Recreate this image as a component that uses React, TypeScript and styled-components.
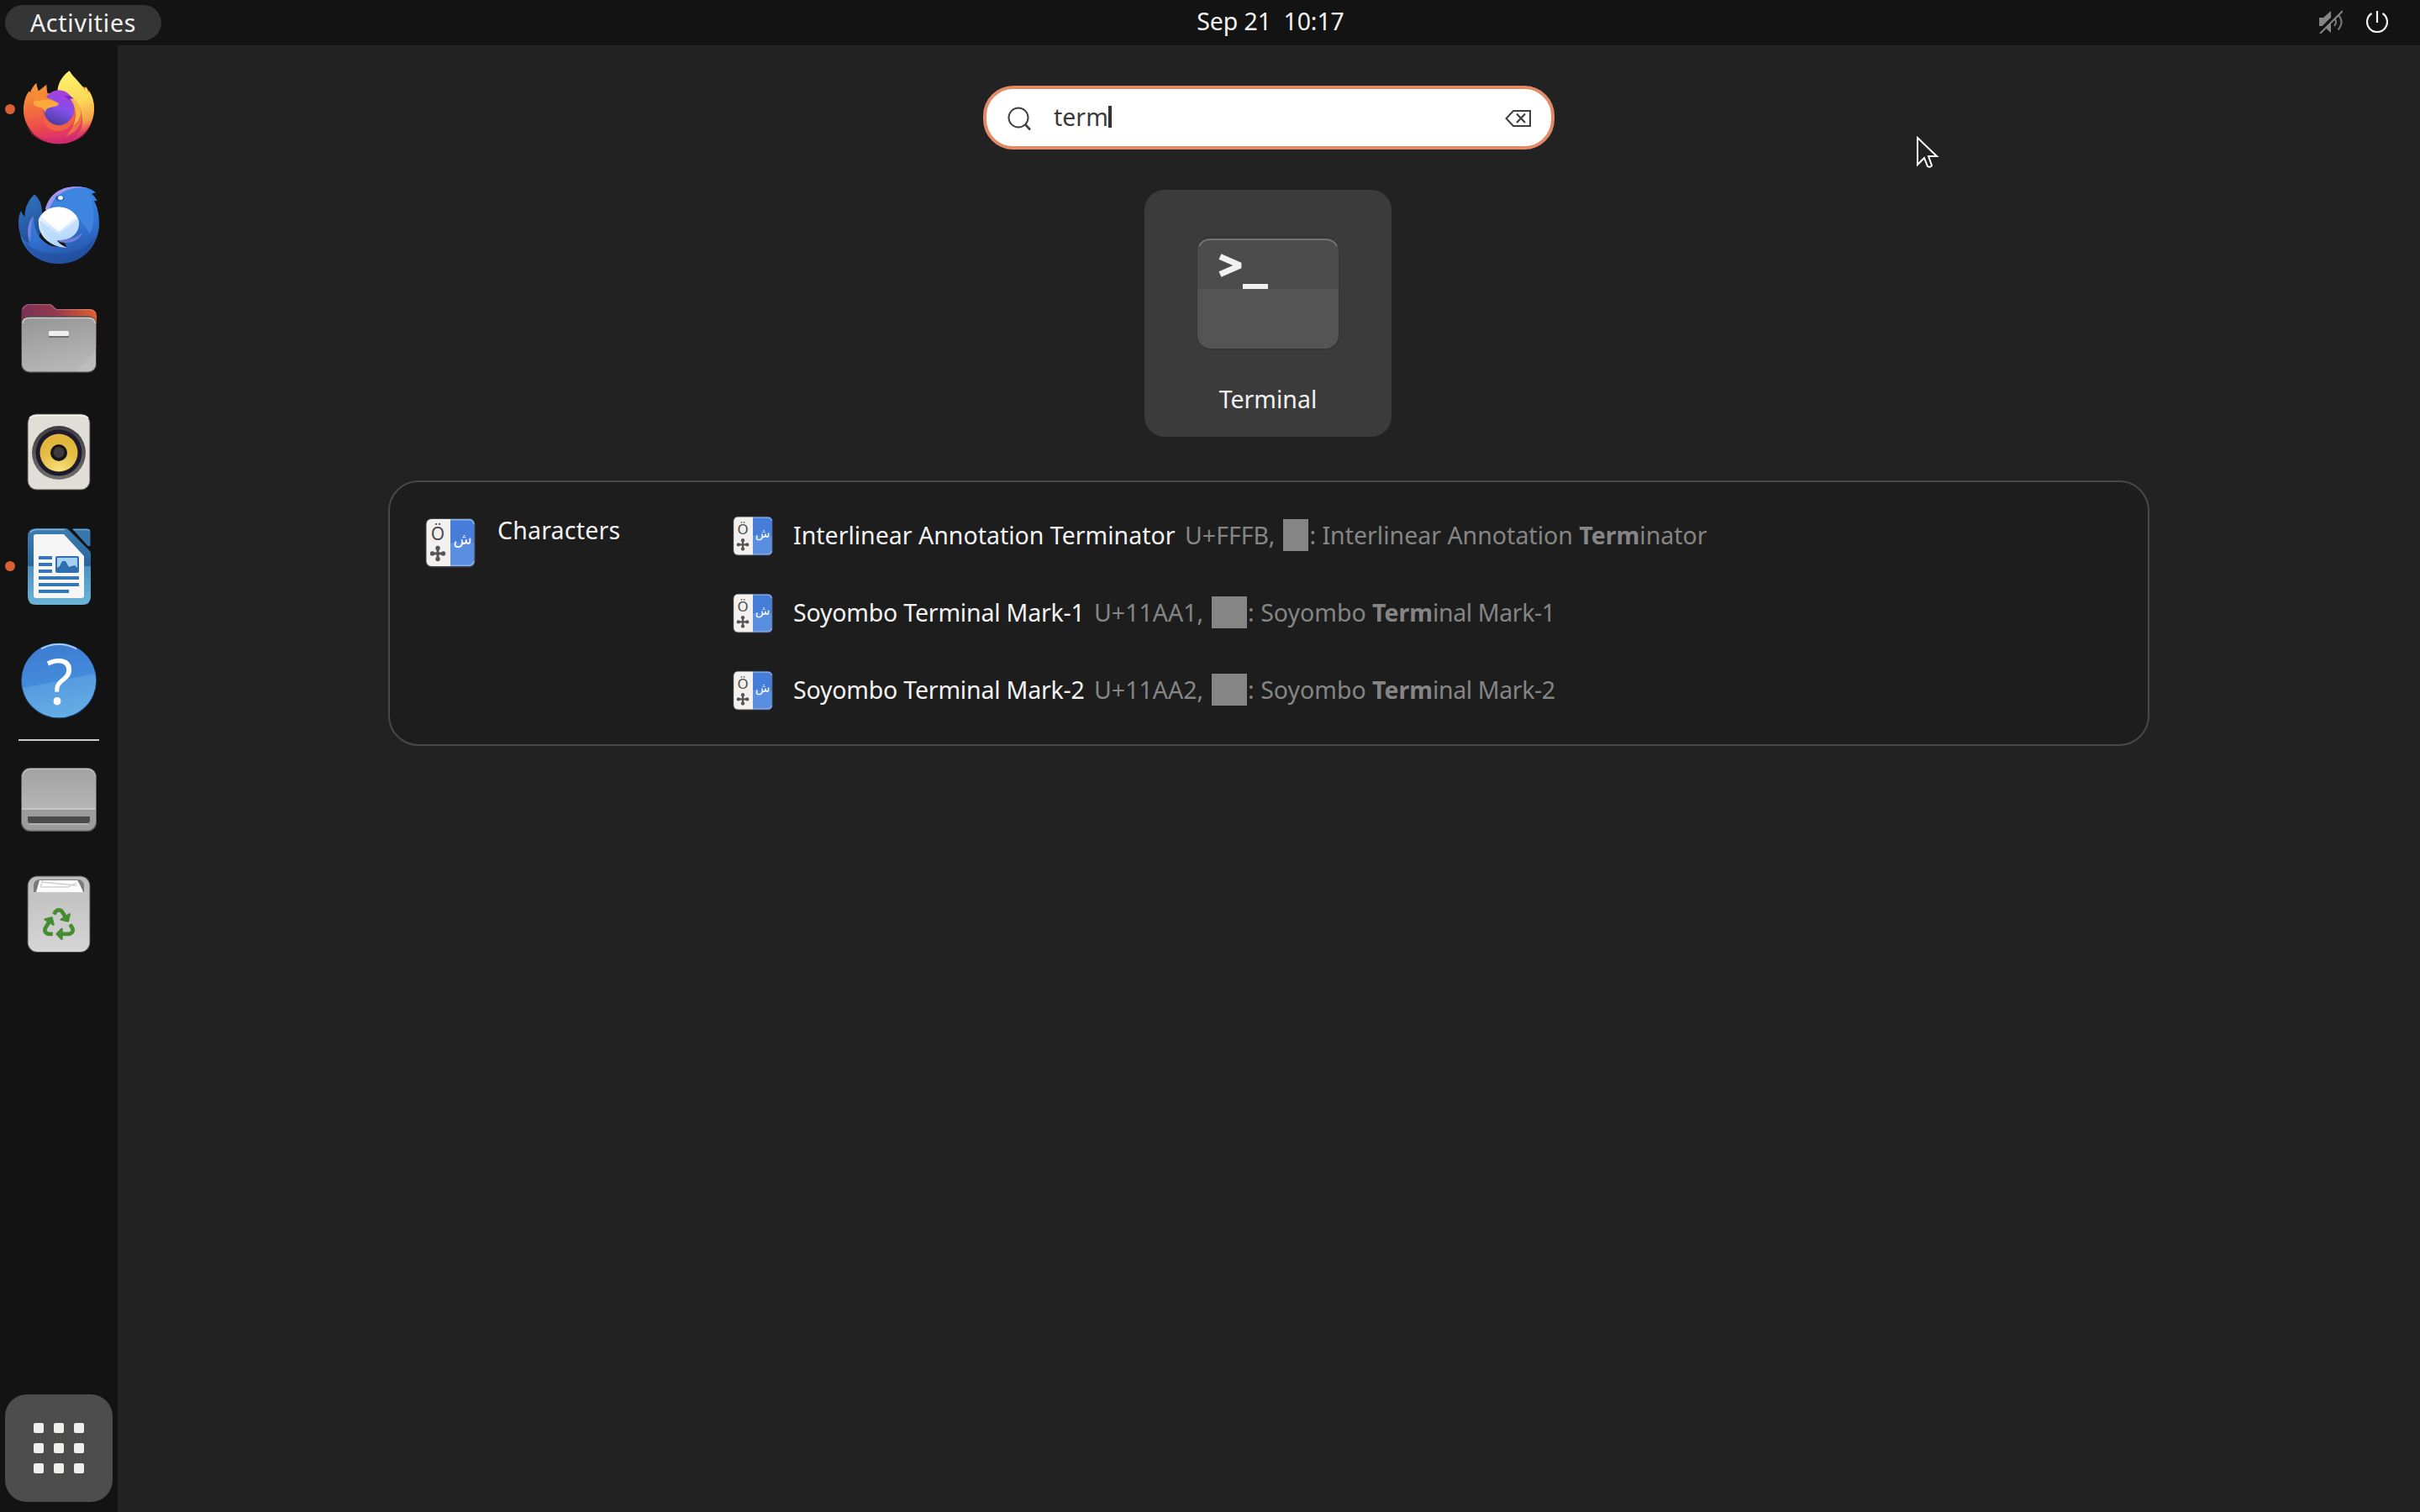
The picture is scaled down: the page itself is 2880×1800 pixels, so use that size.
import React from "react";
import styled, { createGlobalStyle } from "styled-components";
import { FaRecycle } from "react-icons/fa";

const FONT = `"Noto Sans", "Open Sans", sans-serif`;

const Global = createGlobalStyle`
  * { box-sizing: border-box; }
  body { margin: 0; background: #222222; }
`;

const Screen = styled.div`
  position: relative;
  width: 2880px;
  height: 1800px;
  display: flex;
  flex-direction: column;
  overflow: hidden;
  background: #222222;
  color: #f2f2f2;
  font-family: ${FONT};
  font-size: 28.5px;
  line-height: 40px;
`;

const Label = styled.span<{ $track?: number }>`
  white-space: pre;
  letter-spacing: ${(p) => p.$track ?? 0}px;
`;

/* ---------- top bar ---------- */

const TopBar = styled.header`
  flex: none;
  height: 54px;
  padding: 0 38px 0 6px;
  display: grid;
  grid-template-columns: 1fr auto 1fr;
  align-items: center;
  background: #131313;
`;

const ActivitiesButton = styled.div`
  width: 186px;
  height: 42px;
  border-radius: 21px;
  display: flex;
  align-items: center;
  justify-content: center;
  background: #353535;
`;

const Clock = styled.div`
  padding: 0 0 4px 176px;
`;

const StatusArea = styled.div`
  display: flex;
  justify-content: flex-end;
  align-items: center;
  gap: 28px;
  height: 100%;
  padding-bottom: 2px;
`;

/* ---------- dock ---------- */

const Body = styled.div`
  flex: 1;
  display: flex;
  min-height: 0;
`;

const Dock = styled.nav`
  flex: none;
  width: 140px;
  padding: 8px 0 12px;
  display: flex;
  flex-direction: column;
  background: #131313;
`;

const DockItem = styled.div`
  flex: none;
  height: 136px;
  display: grid;
  grid-template-columns: 16px 96px;
  padding-left: 6px;
  align-items: center;
`;

const RunningDot = styled.i<{ $on?: boolean }>`
  width: 12px;
  height: 12px;
  border-radius: 50%;
  background: ${(p) => (p.$on ? "#dc5f33" : "transparent")};
`;

const DockSeparator = styled.hr`
  flex: none;
  width: 96px;
  height: 2px;
  margin: 2px 22px;
  border: 0;
  background: #cdcdcd;
`;

const AppsButton = styled.div`
  margin: auto 6px 0;
  width: 128px;
  height: 128px;
  border-radius: 26px;
  display: grid;
  grid-template-columns: repeat(3, 12px);
  gap: 12px;
  place-content: center;
  background: #4d4d4d;
`;

const AppsDot = styled.i`
  width: 12px;
  height: 12px;
  border-radius: 2px;
  background: #eeeeec;
`;

/* ---------- overview ---------- */

const Overview = styled.main`
  flex: 1;
  padding-top: 48px;
  display: flex;
  flex-direction: column;
  align-items: center;
`;

const SearchEntry = styled.div`
  width: 680px;
  height: 76px;
  border: 4px solid #e38b69;
  border-radius: 36px;
  padding: 0 23px 0 25px;
  display: flex;
  align-items: center;
  background: #ffffff;
  color: #3a3a3a;
`;

const Query = styled.div`
  flex: 1;
  display: flex;
  align-items: center;
  padding: 0 0 2px 25px;
`;

const Caret = styled.i`
  width: 4px;
  height: 26px;
  background: #333;
`;

const AppTile = styled.section`
  margin: 48px 2px 0 0;
  width: 294px;
  height: 294px;
  border-radius: 24px;
  padding-top: 53px;
  display: flex;
  flex-direction: column;
  align-items: center;
  gap: 37px;
  background: #3b3b3b;
`;

const ResultsPanel = styled.section`
  margin-top: 52px;
  width: 2096px;
  height: 316px;
  border: 2px solid #484848;
  border-radius: 36px;
  padding: 18px 40px 18px 42px;
  display: grid;
  grid-template-columns: 366px 1fr;
  background: #1d1d1d;
`;

const Provider = styled.div`
  display: flex;
  align-items: flex-start;
  gap: 26px;
  padding-top: 19px;
`;

const ProviderIcon = styled.div`
  display: flex;
  padding-top: 5px;
`;

const ResultRow = styled.div`
  height: 92px;
  display: flex;
  align-items: center;
`;

const ResultTitle = styled.div<{ $w: number }>`
  width: ${(p) => p.$w}px;
  margin-left: 24px;
  padding-bottom: 2px;
`;

const ResultMeta = styled.div`
  display: flex;
  align-items: center;
  padding-bottom: 2px;
  color: #858585;
  b { font-weight: 700; }
`;

const Glyph = styled.i<{ $w: number }>`
  width: ${(p) => p.$w}px;
  height: 38px;
  margin: 0 1px 0 10px;
  background: #858585;
`;

const Pointer = styled.svg`
  position: absolute;
  left: 2280px;
  top: 162px;
`;

/* ---------- icons ---------- */

const Muted = () => (
  <svg width="28" height="28" viewBox="0 0 28 28">
    <path d="M0 9h5l9-8v26l-9-8H0z" fill="#858585" />
    <path d="M18 10q4 4 0 9M22.500 5.500q8 8.500 0 18" fill="none" stroke="#7a7a7a" strokeWidth="2" />
    <path d="M-.5 26.500L26.500 -.5" stroke="#131313" strokeWidth="4.500" />
    <path d="M1 28L28 1" stroke="#858585" strokeWidth="2" />
  </svg>
);

const Power = () => (
  <svg width="26" height="26" viewBox="0 0 26 26" fill="none" stroke="#f2f2f2" strokeWidth="2.200">
    <path d="M6.500 3A12 12 0 1 0 19.500 3M13 0v14" />
  </svg>
);

const Magnifier = () => (
  <svg width="30" height="32" viewBox="0 0 30 32" fill="none" stroke="#3f3f3f" strokeWidth="2">
    <circle cx="13" cy="16" r="11.500" />
    <path d="M21 24l6 6.500" strokeWidth="2.600" />
  </svg>
);

const Clear = () => (
  <svg width="32" height="24" viewBox="0 -2 32 24" fill="none" stroke="#3f3f3f" strokeWidth="2">
    <path d="M10 2H30V20H10L1.500 11z" />
    <path d="M14 5.500l10 10.500M24 5.500L14 16" strokeWidth="2.200" />
  </svg>
);

const Art = ({ children }: { children: React.ReactNode }) => (
  <svg width="96" height="96" viewBox="0 0 96 96" overflow="visible">{children}</svg>
);

const Firefox = () => (
  <Art>
    <defs>
      <linearGradient id="ffBody" x1="0.25" y1="0" x2="0.55" y2="1">
        <stop offset="0" stopColor="#f79a34" />
        <stop offset=".42" stopColor="#f2693f" />
        <stop offset=".72" stopColor="#ea4350" />
        <stop offset="1" stopColor="#d42a7c" />
      </linearGradient>
      <linearGradient id="ffFlame" x1="0.45" y1="0" x2="0.6" y2="1">
        <stop offset="0" stopColor="#fff36b" />
        <stop offset=".45" stopColor="#fbd857" />
        <stop offset=".75" stopColor="#f4a04c" />
        <stop offset="1" stopColor="#ea4a50" stopOpacity="0" />
      </linearGradient>
      <linearGradient id="ffGlobe" x1="0.7" y1="0" x2="0.3" y2="1">
        <stop offset="0" stopColor="#b23adb" />
        <stop offset=".5" stopColor="#8150ea" />
        <stop offset="1" stopColor="#4a3a9c" />
      </linearGradient>
    </defs>
    <g transform="translate(0 -.8)">
      <path d="M21.300 17.500C22 22 22.500 24 24 27c3-2 6-5 9.300-7.500.2 4 .4 7 1.400 10.500H47l30-8 3.700 1C87 30 90 39 90 48c0 24-19 42-42 42S6 72 6 50c0-9 2-17 6.500-22.500.8 0 1 .5 1.500 1.500C15 25 18 20.500 21.300 17.500z" fill="url(#ffBody)" />
      <path d="M10 70c8 12 24 15 38 14 18-1 32-8 39-20-5 18-22 26-39 26-18 0-32-8-38-20z" fill="#cf2a6c" opacity=".65" />
      <path d="M60.700 3C66 12 74 17 79 26l1.300-4c2 3 2 5 2.700 7.500l1-2.500c4 6 6 13 6 21 0 18-11 33-26 38 9-8 13-16 12-26C75 44 66 33 46.500 27 47 17 53 8 60.700 3z" fill="url(#ffFlame)" />
      <path d="M68 38c7 8 9 18 6 28-4 8-10 12-18 15 8-8 12-17 13-26z" fill="#f0873f" opacity=".7" />
      <path d="M30 48h36c4 10 0 24-18 27-14 0-22-12-18-27z" fill="#ef6044" />
      <ellipse cx="48" cy="47" rx="18.500" ry="21" fill="url(#ffGlobe)" />
      <path d="M60 34c8 2 14 10 14 18 0 7-4 13-9 16 3-7 4-13 2-20-1-5-4-10-7-14z" fill="#f9bd4c" opacity=".9" />
      <path d="M53 33c5-1 9 0 13 3-4 0-5 1-6 2-2-3-4-4-7-5z" fill="#7a2fc0" />
      <path d="M24 27c4 8 14 8 24 15l-14 3-12-2-8-14z" fill="#f58a38" />
      <path d="M17.500 40.500c2-3 5-2 8-2 6-2 14-1 22 3 1 4-5 4-9 5-5 1-6 3-7 7-1-5-3-7-7-7-4-1-7-3-7-6z" fill="#fba83c" />
    </g>
  </Art>
);

const Thunderbird = () => (
  <Art>
    <defs>
      <linearGradient id="tbBody" x1="0.3" y1="0" x2="0.6" y2="1">
        <stop offset="0" stopColor="#3f8ae6" />
        <stop offset=".6" stopColor="#3272d2" />
        <stop offset="1" stopColor="#2350a0" />
      </linearGradient>
      <linearGradient id="tbWing" x1="0" y1="0" x2="0.3" y2="1">
        <stop offset="0" stopColor="#3478c8" />
        <stop offset="1" stopColor="#1f4c8f" />
      </linearGradient>
      <linearGradient id="tbMail" x1="0" y1="0" x2="0" y2="1">
        <stop offset="0" stopColor="#ffffff" />
        <stop offset="1" stopColor="#a9d3fb" />
      </linearGradient>
    </defs>
    <path d="M3 33c1 3 3 5 4.500 7.500C7 30 12 20 18.700 13.500 24 17 28 25 28 34L26 60 14 80C4 70 0 58 0 47c0-6 1-10 3-14z" fill="url(#tbWing)" />
    <path d="M32 31C36 14 50 4 70 4.300c9 0 16 2 22 7l-5 1.500c3 2 5 5 6.700 8.500L90 21c4 7 6 17 6 27 0 28-21 48-48 48C26 96 8 84 2 62c4 6 7 8 11 10-4-12-2-26 5-33 0 16 6 30 22 36l18 2z" fill="url(#tbBody)" />
    <path d="M32 31C36 14 50 3.500 70 4.300c5 0 10 1 13 2-18-3-32 2-38 14-3 5-7 7-10 13z" fill="#a395ee" />
    <path d="M36 33c5-16 16-26 36-27 6 0 11 2 16 5l-6 1 9 9-5-1c5 13 5 28-1 40L66 34 46 26z" fill="#3d85df" />
    <path d="M5 66c10 14 25 19 43 18 20 0 36-8 45-22-6 22-24 34-45 34C27 96 11 84 5 66z" fill="#234f9e" opacity=".6" />
    <path d="M18 39c-7 7-9 20-4 31 1-10 0-20 4-31z" fill="#8f86e4" opacity=".75" />
    <path d="M24 43C29 32 38 28.500 48 28.500S72 36 72 48c0 11-9 19-21 20h-5c2 4 7 7 13 9-20 0-35-13-35-29 0-2-.5-3 0-5z" fill="url(#tbMail)" />
    <path d="M25 44l23 18 23-20c2 8 0 16-6 21-5 4-11 5-19 5C33 64 26 56 25 44z" fill="#b4d8fa" opacity=".65" />
    <path d="M27 40l21 18 21-18C64 32 56 28.500 48 28.500S32 32 27 40z" fill="#ffffff" />
    <path d="M46 68c12 0 22-2 30-9-3 8-11 12-20 12-4 0-8-1-10-3z" fill="#6d7fdd" />
    <ellipse cx="49" cy="18" rx="5.500" ry="3.500" fill="#2a65b5" />
    <ellipse cx="50" cy="17.500" rx="3" ry="2.500" fill="#e9f6ff" />
  </Art>
);

const Files = () => (
  <Art>
    <defs>
      <linearGradient id="flBack" x1="0" y1="0" x2="1" y2="0">
        <stop offset="0" stopColor="#7b3157" />
        <stop offset=".45" stopColor="#93394d" />
        <stop offset="1" stopColor="#e0602f" />
      </linearGradient>
      <linearGradient id="flFront" x1="0.3" y1="0" x2="0.6" y2="1">
        <stop offset="0" stopColor="#989898" />
        <stop offset="1" stopColor="#b8b8b8" />
      </linearGradient>
    </defs>
    <path d="M3.500 60V17c0-5 4-9 9-9h25c4 0 5 6 9 6h38c5 0 8.500 3 8.500 8v38z" fill="url(#flBack)" />
    <path d="M5 14c2-4 4-5.500 8-5.500h24c4 0 5 6 9 6h38c4 0 6 1 8 4" fill="none" stroke="#ffffff" strokeOpacity=".25" strokeWidth="1.200" />
    <rect x="3" y="22" width="90" height="68" rx="10" fill="#4c4c4c" opacity=".8" />
    <rect x="4" y="24" width="88" height="64.500" rx="9" fill="url(#flFront)" />
    <path d="M5 31c0-4 3-6.500 8-6.500h70c5 0 8 2.500 8 6.500" fill="none" stroke="#d0d0d0" strokeWidth="1.400" />
    <path d="M92 63v17c0 5-4 8.500-9 8.500H68z" fill="#fff" opacity=".09" />
    <rect x="36" y="42" width="24" height="6" rx="1.500" fill="#6f6f6f" />
    <rect x="36" y="40" width="24" height="6" rx="1.500" fill="#eeeeee" />
  </Art>
);

const Rhythmbox = () => (
  <Art>
    <defs>
      <radialGradient id="rbCone" cx=".5" cy=".95" r=".8">
        <stop offset="0" stopColor="#f9e27c" />
        <stop offset=".6" stopColor="#e6bf48" />
        <stop offset="1" stopColor="#e2b53c" />
      </radialGradient>
      <linearGradient id="rbRing" x1="0" y1="0" x2="0" y2="1">
        <stop offset="0" stopColor="#3e3e3e" />
        <stop offset="1" stopColor="#6e6e6c" />
      </linearGradient>
    </defs>
    <rect x="10.500" y="2.500" width="75" height="91" rx="11" fill="#4b4a47" />
    <rect x="11.500" y="3.500" width="73" height="89" rx="10" fill="#e0ded6" />
    <path d="M13 8q3-3.500 8-3.500h54q5 0 8 3.500" fill="none" stroke="#f8f7f2" strokeWidth="1.500" />
    <circle cx="48" cy="49" r="32" fill="url(#rbRing)" />
    <circle cx="48" cy="49" r="27.500" fill="#1c1a2b" />
    <circle cx="48" cy="49" r="22.500" fill="url(#rbCone)" />
    <circle cx="48" cy="49" r="10" fill="#161616" />
    <circle cx="48" cy="48.500" r="6.500" fill="#3c3c3c" />
  </Art>
);

const Writer = () => (
  <Art>
    <defs>
      <linearGradient id="wrPage" x1="0" y1="0" x2="0" y2="1">
        <stop offset="0" stopColor="#3b7db2" />
        <stop offset=".49" stopColor="#29659a" />
        <stop offset=".5" stopColor="#4c92c0" />
        <stop offset="1" stopColor="#6db4d8" />
      </linearGradient>
    </defs>
    <path d="M21 3h35q2 0 4 2l24 24q2 2 2 4v51q0 10-10 10H21Q11 94 11 84V13Q11 3 21 3z" fill="url(#wrPage)" />
    <path d="M14 8q3-3.500 7-3.500h34" fill="none" stroke="#7fb0d6" strokeWidth="1.500" />
    <path d="M64 3.500h18q3.500 0 3.500 3.500v17h-3z" fill="#3a76aa" />
    <path d="M65 4.500h17q2 0 2.500 2" fill="none" stroke="#6ea4cd" strokeWidth="1.500" />
    <path d="M20.500 10H54l24 26v47q0 3-3 3H21q-3 0-3-3V12.500q0-2.500 2.500-2.500z" fill="#f6f6f6" />
    <path d="M24 36h16v4H24zM24 44h16v4H24zM24 52h16v4H24zM24 60h48v4H24zM24 68h48v4H24zM24 76h36v4H24z" fill="#3677b8" />
    <rect x="44" y="36" width="28" height="20" rx="2" fill="#2f6fb0" />
    <path d="M46 38h24v12l-3-3-4 1-3 1-4-7-4 0-3 6-3 2z" fill="#a5d2f3" />
  </Art>
);

const Help = () => (
  <Art>
    <defs>
      <linearGradient id="hpDisc" x1=".4" y1="0" x2=".6" y2="1">
        <stop offset="0" stopColor="#3c7bd2" />
        <stop offset=".5" stopColor="#448bdb" />
        <stop offset=".51" stopColor="#569bdf" />
        <stop offset="1" stopColor="#66aee6" />
      </linearGradient>
    </defs>
    <circle cx="48" cy="48.500" r="45" fill="#1b3a66" />
    <circle cx="48" cy="48" r="44.300" fill="url(#hpDisc)" />
    <path d="M27 10.500a43 43 0 0 1 42 0" fill="none" stroke="#a9cdf2" strokeWidth="1.800" />
    <text x="49" y="76.500" textAnchor="middle" fontFamily="Open Sans" fontWeight="400" fontSize="75" fill="#fff">?</text>
  </Art>
);

const Drive = () => (
  <Art>
    <defs>
      <linearGradient id="drTop" x1="0" y1="0" x2="0" y2="1">
        <stop offset="0" stopColor="#a3a3a3" />
        <stop offset="1" stopColor="#b5b5b5" />
      </linearGradient>
    </defs>
    <rect x="3" y="10" width="90" height="76" rx="11" fill="#5f5f5f" />
    <rect x="4" y="11" width="88" height="73.500" rx="10" fill="#9c9c9c" />
    <path d="M4 59V22q0-10 10-10h68q10 0 10 10v37z" fill="url(#drTop)" />
    <path d="M4 59h88" stroke="#cfcfcf" strokeWidth="1.600" />
    <path d="M5 20q1-8 9-8.500h68q8 .5 9 8.500" fill="none" stroke="#bdbdbd" strokeWidth="1.300" />
    <path d="M11 68h74v5q0 3-3 3H14q-3 0-3-3z" fill="#4b4b4b" />
    <path d="M13 77h70" stroke="#bcbcbc" strokeWidth="1.300" />
  </Art>
);

const Trash = () => (
  <Art>
    <defs>
      <linearGradient id="trBin" x1="0" y1="0" x2="0" y2="1">
        <stop offset="0" stopColor="#bcbcbc" />
        <stop offset="1" stopColor="#d6d6d6" />
      </linearGradient>
    </defs>
    <rect x="10.500" y="2.500" width="75" height="91.500" rx="12" fill="#505050" />
    <rect x="11.500" y="3.500" width="73" height="89.500" rx="11" fill="url(#trBin)" />
    <path d="M18 22v-7q0-8 8-8h44q8 0 8 8v7z" fill="#7b7b7b" />
    <path d="M21 22l4-14h45l3 5 4 9z" fill="#ffffff" />
    <path d="M27 10l42 4M27 16h32l10-5M29 8l-3 8" stroke="#cfcfcf" strokeWidth="1.300" fill="none" />
    <path d="M13 22.700h70" stroke="#c8c8c8" strokeWidth="1.400" />
    <FaRecycle x="29" y="41" size={38} color="#468c31" />
  </Art>
);

const TerminalIcon = () => (
  <svg width="172" height="139" viewBox="0 0 172 139">
    <rect x="1" y="2" width="170" height="136" rx="18" fill="#353535" />
    <rect x="2" y="5" width="168" height="131" rx="16" fill="#545454" />
    <path d="M2 65V21Q2 5 18 5h136q16 0 16 16v44z" fill="#4c4c4c" />
    <path d="M4 14Q8 6 18 6h136q10 0 14 8" fill="none" stroke="#727272" strokeWidth="2" />
    <path d="M29 26.500L53 37 29 47.500" fill="none" stroke="#f0f0f0" strokeWidth="7" strokeLinejoin="bevel" />
    <path d="M56 59h30v6H56z" fill="#f0f0f0" />
  </svg>
);

const CharactersIcon = ({ size }: { size: number }) => (
  <svg width={size} height={size} viewBox="0 0 60 60">
    <rect x="0.500" y="1" width="59" height="58.500" rx="7" fill="#46474a" />
    <path d="M30 2H8Q1.500 2 1.500 9v42q0 7 6.500 7h22z" fill="#f2f1ef" />
    <path d="M30 2h22q6.500 0 6.500 7v21H30z" fill="#457dd9" />
    <path d="M30 30h28.500v21q0 7-6.500 7H30z" fill="#5a8ee0" />
    <path d="M30 2.800h22q5 0 6 5M30 57.200h22q5 0 6-5" fill="none" stroke="#8cb3f0" strokeWidth="1.500" />
    <text x="15" y="27" textAnchor="middle" fontFamily="Noto Sans" fontSize="21" fill="#4b4b4b">Ö</text>
    <g fill="#555">
      <path d="M13.500 35h3v16h-3zM7 41.500h16v3H7z" />
      <circle cx="15" cy="36.500" r="2.700" /><circle cx="15" cy="49.500" r="2.700" />
      <circle cx="8.500" cy="43" r="2.700" /><circle cx="21.500" cy="43" r="2.700" />
    </g>
    <text x="44.500" y="32" textAnchor="middle" fontFamily="DejaVu Sans" fontSize="18" fill="#fff">ش</text>
  </svg>
);

/* ---------- data ---------- */

const favourites = [
  { name: "Firefox", Icon: Firefox, running: true },
  { name: "Thunderbird", Icon: Thunderbird },
  { name: "Files", Icon: Files },
  { name: "Rhythmbox", Icon: Rhythmbox },
  { name: "Writer", Icon: Writer, running: true },
  { name: "Help", Icon: Help },
];

const places = [
  { name: "Drive", Icon: Drive },
  { name: "Trash", Icon: Trash },
];

const results = [
  { title: "Interlinear Annotation Terminator", titleWidth: 466, code: "U+FFFB,", glyph: 30, lead: ": Interlinear Annotation ", tail: "inator", track: 0, tailTrack: 0 },
  { title: "Soyombo Terminal Mark-1", titleWidth: 358, code: "U+11AA1,", glyph: 42, lead: ": Soyombo ", tail: "inal Mark-1", track: -0.2, tailTrack: -0.4 },
  { title: "Soyombo Terminal Mark-2", titleWidth: 358, code: "U+11AA2,", glyph: 42, lead: ": Soyombo ", tail: "inal Mark-2", track: -0.2, tailTrack: -0.4 },
];

export default function App() {
  return (
    <Screen>
      <Global />
      <TopBar>
        <ActivitiesButton>
          <Label $track={0.75}>Activities</Label>
        </ActivitiesButton>
        <Clock>
          <Label $track={-0.1}>{"Sep 21  10:17"}</Label>
        </Clock>
        <StatusArea>
          <Muted />
          <Power />
        </StatusArea>
      </TopBar>
      <Body>
        <Dock>
          {favourites.map(({ name, Icon, running }) => (
            <DockItem key={name}>
              <RunningDot $on={running} />
              <Icon />
            </DockItem>
          ))}
          <DockSeparator />
          {places.map(({ name, Icon }) => (
            <DockItem key={name}>
              <RunningDot />
              <Icon />
            </DockItem>
          ))}
          <AppsButton>
            {Array.from({ length: 9 }, (_, i) => (
              <AppsDot key={i} />
            ))}
          </AppsButton>
        </Dock>
        <Overview>
          <SearchEntry>
            <Magnifier />
            <Query>
              <Label>term</Label>
              <Caret />
            </Query>
            <Clear />
          </SearchEntry>
          <AppTile>
            <TerminalIcon />
            <Label>Terminal</Label>
          </AppTile>
          <ResultsPanel>
            <Provider>
              <ProviderIcon>
                <CharactersIcon size={60} />
              </ProviderIcon>
              <Label $track={0.2}>Characters</Label>
            </Provider>
            <div>
              {results.map((r) => (
                <ResultRow key={r.title}>
                  <CharactersIcon size={48} />
                  <ResultTitle $w={r.titleWidth}>
                    <Label $track={r.track}>{r.title}</Label>
                  </ResultTitle>
                  <ResultMeta>
                    <Label>{r.code}</Label>
                    <Glyph $w={r.glyph} />
                    <Label>{r.lead}</Label>
                    <Label as="b">Term</Label>
                    <Label $track={r.tailTrack}>{r.tail}</Label>
                  </ResultMeta>
                </ResultRow>
              ))}
            </div>
          </ResultsPanel>
        </Overview>
      </Body>
      <Pointer width="28" height="40" viewBox="0 0 28 40">
        <path d="M2 2v32l8-8 4 10q3 2 5-1l-4-11h10z" fill="#222" stroke="#ffffff" strokeWidth="2" />
      </Pointer>
    </Screen>
  );
}
